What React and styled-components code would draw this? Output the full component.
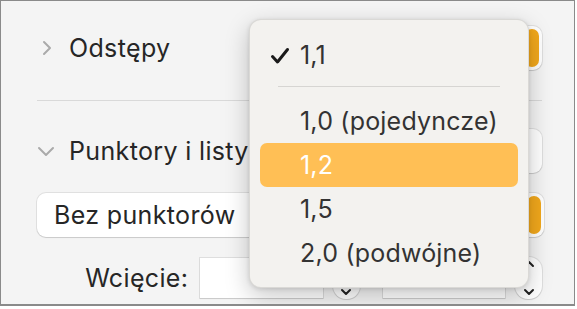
import React from 'react';
import styled, { createGlobalStyle } from 'styled-components';

const GlobalStyle = createGlobalStyle`
  body {
    margin: 0;
    background: #ffffff;
    font-family: Inter, "Noto Sans", "Liberation Sans", sans-serif;
  }
`

const Frame = styled.div`
  position: relative;
  box-sizing: border-box;
  width: 575px;
  height: 306px;
  border: 1px solid #8a8a8a;
  border-bottom-width: 2px;
  background: #f4f4f4;
  overflow: hidden;
`

const Panel = styled.div`
  padding: 27px 32px 0 36px;
`

const Header = styled.div`
  display: flex;
  align-items: center;
  height: ${p => p.h}px;
`

const Disclosure = styled.div`
  box-sizing: border-box;
  width: 32px;
  display: flex;
  align-items: center;
  padding-left: ${p => p.open ? 0 : 4}px;
`

const Title = styled.div`
  flex: 1;
  font-size: 25px;
  letter-spacing: 0.35px;
  color: #262626;
  white-space: nowrap;
`

const PopupButton = styled.div`
  box-sizing: border-box;
  display: flex;
  align-items: center;
  flex-shrink: 0;
  width: ${p => p.w}px;
  height: 44px;
  background: #ffffff;
  border-radius: 9px;
  box-shadow: 0 0 0 1px rgba(0, 0, 0, 0.08), 0 1px 1px rgba(0, 0, 0, 0.1);
  padding: 3px;
  font-size: 25px;
  letter-spacing: 0.35px;
  color: #262626;
`

const PopupLabel = styled.div`
  flex: 1;
  padding-left: 14px;
`

const Arrows = styled.div`
  width: 14px;
  align-self: stretch;
  border-radius: 7px;
  background: #f2a81c;
`

const Divider = styled.div`
  height: 1px;
  background: #d9d9d9;
  margin: 7px 0 0 0;
`

const Gap = styled.div`
  height: ${p => p.h}px;
`

const IndentRow = styled.div`
  display: flex;
  align-items: center;
  height: 40px;
`

const FieldLabel = styled.div`
  box-sizing: border-box;
  width: 164px;
  text-align: right;
  padding-right: 12px;
  font-size: 25px;
  letter-spacing: 0.35px;
  color: #262626;
`

const Field = styled.div`
  width: 123px;
  height: 40px;
  background: #ffffff;
  box-shadow: 0 0 0 1px rgba(0, 0, 0, 0.09), 0 1px 1px rgba(0, 0, 0, 0.08);
`

const Stepper = styled.div`
  display: flex;
  flex-direction: column;
  align-items: center;
  justify-content: space-between;
  box-sizing: border-box;
  width: 27px;
  height: 42px;
  margin: 0 ${p => p.mr}px 0 10px;
  padding: 3px 0;
  background: #ffffff;
  border-radius: 13px;
  box-shadow: 0 0 0 1px rgba(0, 0, 0, 0.08), 0 1px 1px rgba(0, 0, 0, 0.1);
`

const Menu = styled.div`
  position: absolute;
  left: 248px;
  top: 18px;
  box-sizing: border-box;
  width: 280px;
  height: 269px;
  padding: 13px 10px 0 10px;
  background: #f3f2ef;
  border-radius: 12px;
  border: 1px solid rgba(0, 0, 0, 0.1);
  box-shadow: 0 8px 24px rgba(0, 0, 0, 0.22), 0 1px 4px rgba(0, 0, 0, 0.12);
`

const Item = styled.div`
  position: relative;
  display: flex;
  align-items: center;
  height: 44px;
  padding-left: 40px;
  border-radius: 7px;
  font-size: 25px;
  letter-spacing: 0.2px;
  color: ${p => p.active ? '#ffffff' : '#333333'};
  background: ${p => p.active ? '#ffbf55' : 'transparent'};
`

const Check = styled.svg`
  position: absolute;
  left: 10px;
  top: 14px;
`

const MenuSeparator = styled.div`
  height: 1px;
  margin: 9px 18px 12px 18px;
  background: #d6d5d2;
`

const Chevron = ({ d, w, h, color = '#aaaaaa', sw = 2 }) => (
  <svg width={w} height={h} viewBox={`0 0 ${w} ${h}`}>
    <path d={d} fill="none" stroke={color} strokeWidth={sw} strokeLinecap="round" strokeLinejoin="round" />
  </svg>
)

const items = ['1,0 (pojedyncze)', '1,2', '1,5', '2,0 (podwójne)']

export default function App() {
  return (
    <>
      <GlobalStyle />
      <Frame>
        <Panel>
          <Header h={40}>
            <Disclosure>
              <Chevron w={12} h={16} d="M3 2 L9 8 L3 14" />
            </Disclosure>
            <Title>Odstępy</Title>
            <PopupButton w={200}>
              <PopupLabel />
              <Arrows />
            </PopupButton>
          </Header>
          <Gap h={25} />
          <Divider />
          <Gap h={28} />
          <Header h={44}>
            <Disclosure open>
              <Chevron w={18} h={12} d="M2 3 L9 10 L16 3" />
            </Disclosure>
            <Title>Punktory i listy</Title>
            <PopupButton w={200}>
              <PopupLabel />
            </PopupButton>
          </Header>
          <Gap h={20} />
          <PopupButton w={507}>
            <PopupLabel>Bez punktorów</PopupLabel>
            <Arrows />
          </PopupButton>
          <Gap h={21} />
          <IndentRow>
            <FieldLabel>Wcięcie:</FieldLabel>
            <Field />
            <Stepper mr={23}>
              <Chevron w={12} h={8} color="#222222" d="M2 6 L6 2 L10 6" />
              <Chevron w={12} h={8} color="#222222" d="M2 2 L6 6 L10 2" />
            </Stepper>
            <Field />
            <Stepper mr={0}>
              <Chevron w={12} h={8} color="#222222" d="M2 6 L6 2 L10 6" />
              <Chevron w={12} h={8} color="#222222" d="M2 2 L6 6 L10 2" />
            </Stepper>
          </IndentRow>
        </Panel>
        <Menu>
          <Item>
            <Check width="20" height="18" viewBox="0 0 20 18">
              <path d="M2.5 9.5 L7.5 15 L17.5 2.5" fill="none" stroke="#1a1a1a" strokeWidth="3" strokeLinecap="round" strokeLinejoin="round" />
            </Check>
            1,1
          </Item>
          <MenuSeparator />
          {items.map((label, i) => (
            <Item key={i} active={label === '1,2'}>{label}</Item>
          ))}
        </Menu>
      </Frame>
    </>
  );
}
